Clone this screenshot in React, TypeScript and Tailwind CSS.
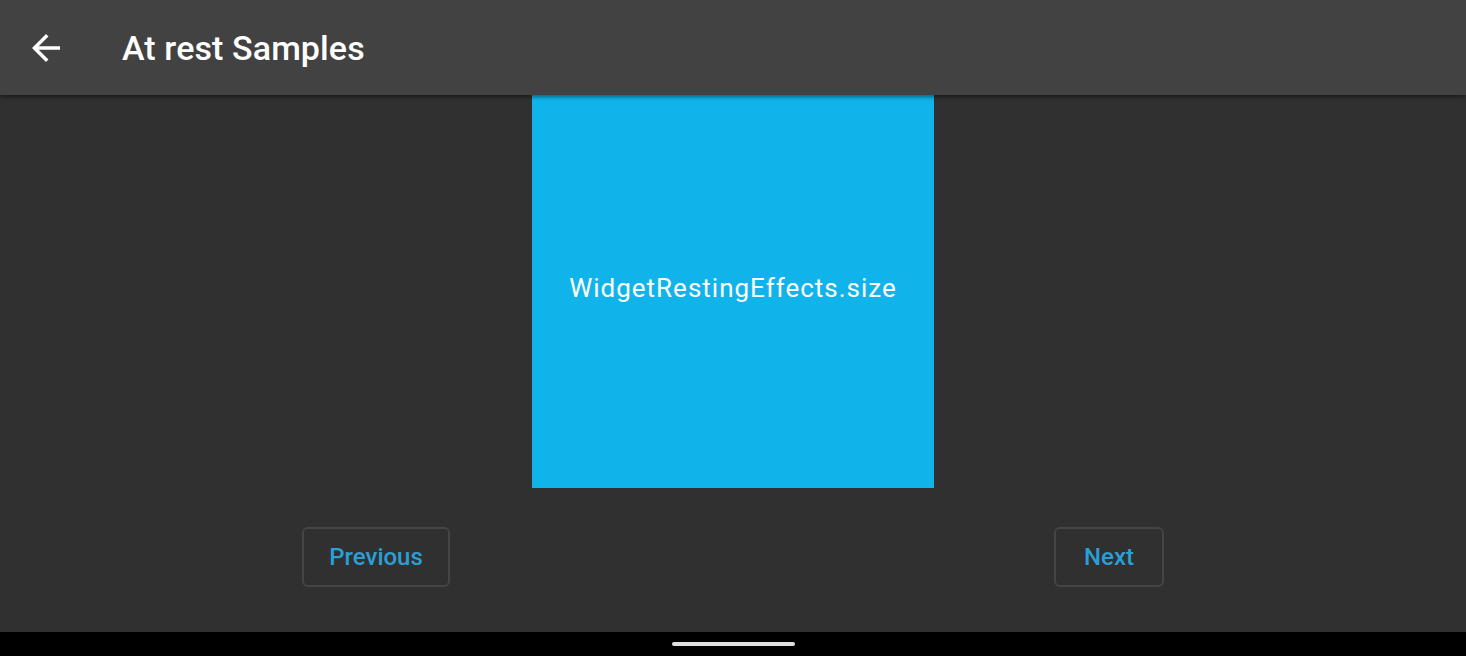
import React from "react";

export default function App() {
  return (
    <div className="w-[1466px] h-[656px] flex flex-col bg-[#303030] overflow-hidden" style={{ fontFamily: "Roboto, 'Noto Sans', sans-serif" }}>
      <div className="relative z-10 h-[95px] shrink-0 bg-[#424242] flex items-center shadow-[0_2px_4px_rgba(0,0,0,0.45)]">
        <div className="w-[92px] h-[92px] flex items-center justify-center">
          <svg width="42" height="42" viewBox="0 0 24 24" fill="#ffffff">
            <path d="M20 11H7.83l5.59-5.59L12 4l-8 8 8 8 1.41-1.41L7.83 13H20v-2z" />
          </svg>
        </div>
        <div className="ml-[30px] text-white text-[34px] font-medium leading-none tracking-[0.1px]">At rest Samples</div>
      </div>
      <div className="flex-1 flex flex-col items-center">
        <div className="w-[402px] h-[393px] bg-[#10b4eb] flex items-center justify-center pb-[8px]">
          <span className="text-white text-[26px] leading-none tracking-[1px]">WidgetRestingEffects.size</span>
        </div>
        <div className="w-full flex justify-around mt-[39px]">
          <button className="h-[60px] w-[148px] rounded-[6px] border-2 border-[#454545] text-[#2a9fd6] text-[24px] font-medium">Previous</button>
          <button className="h-[60px] w-[110px] rounded-[6px] border-2 border-[#454545] text-[#2a9fd6] text-[24px] font-medium">Next</button>
        </div>
      </div>
      <div className="h-[24px] shrink-0 bg-black flex items-center justify-center">
        <div className="w-[123px] h-[4px] rounded-[2px] bg-[#e0e0e0]" />
      </div>
    </div>
  );
}
